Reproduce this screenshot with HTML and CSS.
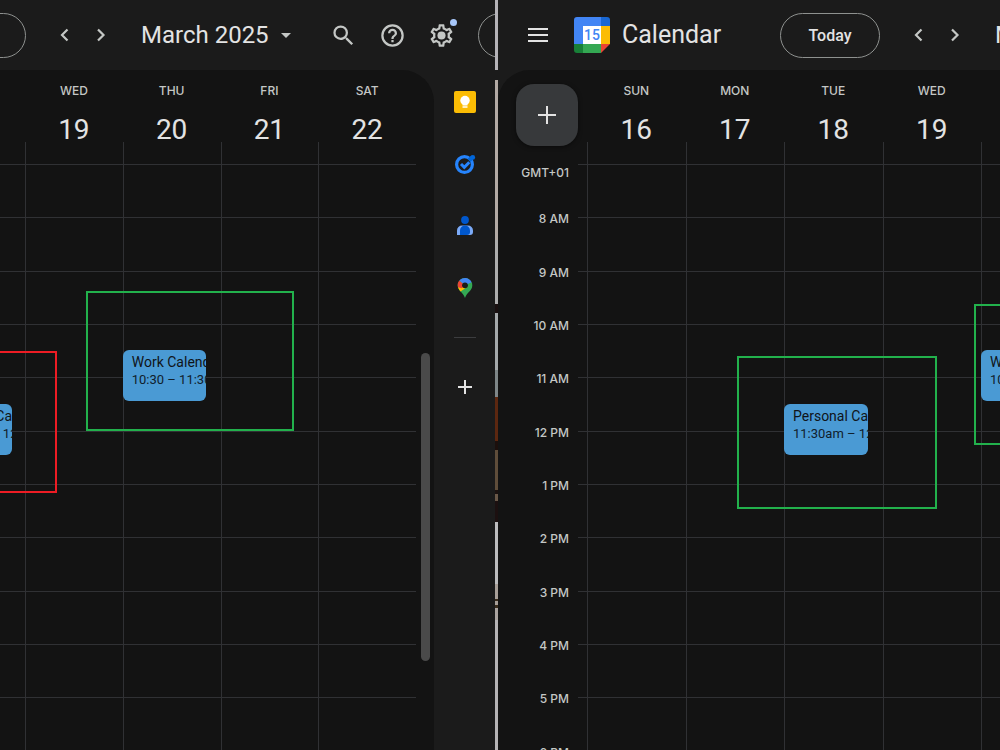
FILE: index.html
```html
<!DOCTYPE html>
<html lang="en">
<head>
  <meta charset="UTF-8">
  <meta name="viewport" content="width=device-width, initial-scale=1.0">
  <title>Calendar - March 2025</title>
  <link rel="stylesheet" href="styles.css">
</head>
<body>
  <div class="desktop">

    <!-- Left window -->
    <section class="window window-left">
      <header class="topbar">
        <button class="today today-cut" aria-label="Today"></button>
        <button class="icon-button" aria-label="Previous week">
          <svg width="24" height="24" viewBox="0 0 24 24"><path d="M14.5 6.5L9 12l5.5 5.5" fill="none" stroke="currentColor" stroke-width="2.2"/></svg>
        </button>
        <button class="icon-button" aria-label="Next week">
          <svg width="24" height="24" viewBox="0 0 24 24"><path d="M9 6.5L14.5 12 9 17.5" fill="none" stroke="currentColor" stroke-width="2.2"/></svg>
        </button>
        <button class="month">March 2025
          <svg width="10" height="5" viewBox="0 0 10 5"><path d="M0 0h10L5 5z" fill="#c4c7c5"/></svg>
        </button>
        <div class="tools">
          <button class="tool-button" aria-label="Search">
            <svg width="27" height="27" viewBox="0 0 24 24"><path fill="currentColor" d="M15.5 14h-.79l-.28-.27A6.47 6.47 0 0 0 16 9.5 6.5 6.5 0 1 0 9.5 16c1.61 0 3.09-.59 4.23-1.57l.27.28v.79l5 4.99L20.49 19l-4.99-5zm-6 0a4.5 4.5 0 1 1 0-9 4.5 4.5 0 0 1 0 9z"/></svg>
          </button>
          <button class="tool-button" aria-label="Help">
            <svg width="27" height="27" viewBox="0 0 24 24"><path fill="currentColor" d="M11 18h2v-2h-2v2zm1-16a10 10 0 1 0 0 20 10 10 0 0 0 0-20zm0 18a8 8 0 1 1 0-16 8 8 0 0 1 0 16zm0-14a4 4 0 0 0-4 4h2a2 2 0 1 1 4 0c0 2-3 1.75-3 5h2c0-2.25 3-2.5 3-5a4 4 0 0 0-4-4z"/></svg>
          </button>
          <button class="tool-button" aria-label="Settings">
            <svg width="27" height="27" viewBox="0 0 24 24"><path fill="currentColor" d="M19.43 12.98c.04-.32.07-.64.07-.98 0-.34-.03-.66-.07-.98l2.11-1.65c.19-.15.24-.42.12-.64l-2-3.46c-.09-.16-.26-.25-.44-.25-.06 0-.12.01-.17.03l-2.49 1c-.52-.4-1.08-.73-1.69-.98l-.38-2.65C14.46 2.18 14.25 2 14 2h-4c-.25 0-.46.18-.49.42l-.38 2.65c-.61.25-1.17.59-1.69.98l-2.49-1c-.06-.02-.12-.03-.18-.03-.17 0-.34.09-.43.25l-2 3.46c-.13.22-.07.49.12.64l2.11 1.65c-.04.32-.07.65-.07.98 0 .33.03.66.07.98l-2.11 1.65c-.19.15-.24.42-.12.64l2 3.46c.09.16.26.25.44.25.06 0 .12-.01.17-.03l2.49-1c.52.4 1.08.73 1.69.98l.38 2.65c.03.24.24.42.49.42h4c.25 0 .46-.18.49-.42l.38-2.65c.61-.25 1.17-.59 1.69-.98l2.49 1c.06.02.12.03.18.03.17 0 .34-.09.43-.25l2-3.46c.12-.22.07-.49-.12-.64l-2.11-1.65zm-1.98-1.71c.04.31.05.52.05.73 0 .21-.02.43-.05.73l-.14 1.13.89.7 1.08.84-.7 1.21-1.27-.51-1.04-.42-.9.68c-.43.32-.84.56-1.25.73l-1.06.43-.16 1.13-.2 1.35h-1.4l-.19-1.35-.16-1.13-1.06-.43c-.43-.18-.83-.41-1.23-.71l-.91-.7-1.06.43-1.27.51-.7-1.21 1.08-.84.89-.7-.14-1.13c-.03-.31-.05-.54-.05-.74s.02-.43.05-.73l.14-1.13-.89-.7-1.08-.84.7-1.21 1.27.51 1.04.42.9-.68c.43-.32.84-.56 1.25-.73l1.06-.43.16-1.13.2-1.35h1.39l.19 1.35.16 1.13 1.06.43c.43.18.83.41 1.23.71l.91.7 1.06-.43 1.27-.51.7 1.21-1.07.85-.89.7.14 1.13z"/><circle cx="12" cy="12" r="3.6" fill="currentColor"/></svg>
            <span class="dot"></span>
          </button>
          <button class="account" aria-label="Account"></button>
        </div>
      </header>

      <div class="main">
        <div class="pane">
          <div class="week-head">
            <div></div>
            <div class="day-head"><span>WED</span><b>19</b></div>
            <div class="day-head"><span>THU</span><b>20</b></div>
            <div class="day-head"><span>FRI</span><b>21</b></div>
            <div class="day-head"><span>SAT</span><b>22</b></div>
          </div>
          <div class="week-body">
            <div class="hours">
              <i></i><i></i><i></i><i></i><i></i><i></i><i></i><i></i><i></i><i></i><i></i>
            </div>
            <div class="days">
              <div class="day-cut">
                <div class="event event-noon event-cut"><strong>Personal Ca</strong><span>11:30am – 12</span></div>
              </div>
              <div class="day"></div>
              <div class="day">
                <div class="event event-morning"><strong>Work Calendar</strong><span>10:30 – 11:30</span></div>
              </div>
              <div class="day"></div>
              <div class="day"></div>
            </div>
            <div class="mark mark-red"></div>
            <div class="mark mark-work"></div>
          </div>
          <div class="scroll-thumb"></div>
        </div>

        <aside class="side">
          <button aria-label="Keep">
            <svg width="22" height="22" viewBox="0 0 22 22"><rect width="22" height="22" rx="2" fill="#fbbc04"/><circle cx="11" cy="9.5" r="4.7" fill="#fff"/><path d="M8.5 11h5v3.4h-5zM8.5 15.200h5v1.6h-5z" fill="#fff"/></svg>
          </button>
          <button aria-label="Tasks">
            <svg width="22" height="22" viewBox="0 0 22 22"><circle cx="10.5" cy="11.5" r="7.9" fill="none" stroke="#2684fc" stroke-width="3.2"/><path d="M7 11l3.300 3.300 5-5" fill="none" stroke="#2684fc" stroke-width="3"/><path d="M15 7.500l3.500-3.500" stroke="#0066da" stroke-width="4"/><circle cx="18.800" cy="4.400" r="2.300" fill="#0066da"/></svg>
          </button>
          <button aria-label="Contacts">
            <svg width="22" height="22" viewBox="0 0 22 22"><circle cx="11" cy="5" r="3.9" fill="#0057cc"/><path d="M3 20v-4.500a5 5 0 0 1 5-5h6a5 5 0 0 1 5 5V17a3 3 0 0 1-3 3z" fill="#7baaf7"/><path d="M6 20v-4.500a5 5 0 0 1 10 0V17a3 3 0 0 1-3 3z" fill="#0057cc"/></svg>
          </button>
          <button aria-label="Maps">
            <svg width="22" height="22" viewBox="0 0 22 22">
              <path d="M11 1a7.300 7.300 0 0 1 7.300 7.300c0 5.700-5.300 6.700-7.300 12.700-2-6-7.300-7-7.300-12.700A7.300 7.300 0 0 1 11 1z" fill="#34a853"/>
              <path d="M4 10.200c.5 1.600 1.400 2.800 2.500 4.300L13.200 10 11 8.300z" fill="#fbbc04"/>
              <path d="M5.400 3.600a7.300 7.300 0 0 0-1.400 6.600l3.700 1.100L11 8.300z" fill="#ea4335"/>
              <path d="M5.400 3.600A7.300 7.300 0 0 1 17.600 5.200L11 8.300z" fill="#4285f4"/>
              <circle cx="11" cy="8.300" r="2.900" fill="#1b1b1b"/>
            </svg>
          </button>
          <hr>
          <button aria-label="Get add-ons">
            <svg width="14" height="14" viewBox="0 0 14 14"><path d="M7 0v14M0 7h14" stroke="#e3e3e3" stroke-width="2"/></svg>
          </button>
        </aside>
      </div>
    </section>

    <div class="divider"></div>

    <!-- Right window -->
    <section class="window window-right">
      <header class="topbar">
        <button class="icon-button menu" aria-label="Main menu">
          <svg width="20" height="14" viewBox="0 0 20 14"><path d="M0 1h20M0 7h20M0 13h20" stroke="#e3e3e3" stroke-width="2"/></svg>
        </button>
        <div class="brand">
          <svg width="36" height="36" viewBox="0 0 36 36">
            <path d="M3 0h24v9H9v18H0V3a3 3 0 0 1 3-3z" fill="#4285f4"/>
            <path d="M27 0h6a3 3 0 0 1 3 3v6h-9z" fill="#1967d2"/>
            <path d="M27 9h9v18h-9z" fill="#fbbc04"/>
            <path d="M9 27h18v9H9z" fill="#34a853"/>
            <path d="M0 27h9v9H3a3 3 0 0 1-3-3z" fill="#188038"/>
            <path d="M27 27h9l-9 9z" fill="#ea4335"/>
            <path d="M9 9h18v18H9z" fill="#fff"/>
            <text x="18" y="23" class="logo-day">15</text>
          </svg>
          <span>Calendar</span>
        </div>
        <button class="today">Today</button>
        <button class="icon-button" aria-label="Previous week">
          <svg width="24" height="24" viewBox="0 0 24 24"><path d="M14.5 6.5L9 12l5.5 5.5" fill="none" stroke="currentColor" stroke-width="2.2"/></svg>
        </button>
        <button class="icon-button" aria-label="Next week">
          <svg width="24" height="24" viewBox="0 0 24 24"><path d="M9 6.5L14.5 12 9 17.5" fill="none" stroke="currentColor" stroke-width="2.2"/></svg>
        </button>
        <button class="month">March 2025</button>
      </header>

      <div class="main">
        <div class="pane">
          <div class="week-head">
            <div>
              <button class="create" aria-label="Create">
                <svg width="18" height="18" viewBox="0 0 18 18"><path d="M9 0v18M0 9h18" stroke="#e3e3e3" stroke-width="2"/></svg>
              </button>
            </div>
            <div class="day-head"><span>SUN</span><b>16</b></div>
            <div class="day-head"><span>MON</span><b>17</b></div>
            <div class="day-head"><span>TUE</span><b>18</b></div>
            <div class="day-head"><span>WED</span><b>19</b></div>
            <div class="day-head"></div>
          </div>
          <div class="week-body">
            <div class="times">
              <span class="zone">GMT+01</span>
              <span>8 AM</span>
              <span>9 AM</span>
              <span>10 AM</span>
              <span>11 AM</span>
              <span>12 PM</span>
              <span>1 PM</span>
              <span>2 PM</span>
              <span>3 PM</span>
              <span>4 PM</span>
              <span>5 PM</span>
              <span>6 PM</span>
            </div>
            <div class="hours">
              <i></i><i></i><i></i><i></i><i></i><i></i><i></i><i></i><i></i><i></i><i></i>
            </div>
            <div class="days">
              <div></div>
              <div class="day"></div>
              <div class="day"></div>
              <div class="day">
                <div class="event event-noon"><strong>Personal Calendar</strong><span>11:30am – 12:30pm</span></div>
              </div>
              <div class="day"></div>
              <div class="day">
                <div class="event event-morning event-wide"><strong>Work Calendar</strong><span>10:30 – 11:30</span></div>
              </div>
            </div>
            <div class="mark mark-personal"></div>
            <div class="mark mark-edge"></div>
          </div>
        </div>
      </div>
    </section>

  </div>
</body>
</html>
```
FILE: styles.css
```css
* {
  box-sizing: border-box;
}

body {
  margin: 0;
  background: #1b1b1b;
  color: #e3e3e3;
  font-family: Roboto, "Liberation Sans", sans-serif;
}

button {
  display: flex;
  align-items: center;
  justify-content: center;
  flex-shrink: 0;
  padding: 0;
  border: none;
  background: none;
  color: #c4c7c5;
  font-family: inherit;
  cursor: pointer;
}

.desktop {
  display: flex;
  height: 100vh;
  overflow: hidden;
}

.window {
  display: flex;
  flex-direction: column;
  min-width: 0;
  overflow: hidden;
}

.window-left {
  flex: 495 1 0;
}

.window-right {
  flex: 502 1 0;
}

/* strip of wallpaper between the two windows */
.divider {
  width: 3px;
  background: linear-gradient(
    #b5b3b8 0 70px, #1b1b1b 70px 80px,
    #b3aaa5 80px 240px, #adadad 240px 304px, #1a1010 304px 313px,
    #a5a9ab 313px 370px, #7e8688 370px 397px, #5c2710 397px 441px,
    #1c0f0c 441px 450px, #5f4d3a 450px 490px, #1c1210 490px 494px,
    #6a5848 494px 501px, #1c1010 501px 522px, #bcbcbe 522px 584px,
    #a89f98 584px 599px, #3a2c1c 599px 601px, #a89f98 601px 605px,
    #3a2c1c 605px 608px, #aaa39f 608px 620px, #b5b3b5 620px);
}

/* Top bar */
.topbar {
  display: flex;
  align-items: center;
  flex-shrink: 0;
  height: 70px;
}

.icon-button {
  width: 36px;
  height: 36px;
}

.menu {
  margin: 0 18px 0 22px;
}

.brand {
  display: flex;
  align-items: center;
  flex-shrink: 0;
  gap: 12px;
  width: 206px;
  font-size: 25px;
  line-height: 32px;
}

.logo-day {
  fill: #4285f4;
  font-size: 14px;
  font-weight: 500;
  text-anchor: middle;
}

.today {
  width: 100px;
  height: 45px;
  margin-right: 21px;
  border: 1px solid #8e918f;
  border-radius: 23px;
  color: #e3e3e3;
  font-size: 16px;
  font-weight: 500;
}

.today-cut {
  margin-left: -74px;
}

.month {
  gap: 12px;
  margin-left: 22px;
  color: #e3e3e3;
  font-size: 24px;
  line-height: 32px;
  white-space: nowrap;
}

.tools {
  display: flex;
  align-items: center;
  gap: 1px;
  margin: 0 -28px 0 auto;
}

.tool-button {
  position: relative;
  width: 48px;
  height: 48px;
}

.dot {
  position: absolute;
  top: 8px;
  right: 8px;
  width: 7px;
  height: 7px;
  border-radius: 50%;
  background: #a8c7fa;
}

.account {
  width: 45px;
  height: 45px;
  margin-left: 12px;
  border: 1px solid #8e918f;
  border-radius: 50%;
}

/* Calendar */
.main {
  display: flex;
  flex: 1;
  min-height: 0;
}

.pane {
  position: relative;
  flex: 1;
  min-width: 0;
  overflow: hidden;
  background: #131313;
}

.window-left .pane {
  border-top-right-radius: 32px;
}

.window-right .pane {
  border-top-left-radius: 32px;
}

.week-head,
.days {
  display: grid;
}

.window-left .week-head,
.window-left .days {
  grid-template-columns: 25px repeat(4, 1fr) 18px;
}

.window-right .week-head,
.window-right .days {
  grid-template-columns: 89px repeat(4, 1fr) 19px;
}

.week-head {
  height: 94px;
}

.day-head {
  position: relative;
  padding-top: 13px;
  text-align: center;
}

.day-head::before {
  content: "";
  position: absolute;
  left: 0;
  bottom: 0;
  height: 22px;
  border-left: 1px solid #303134;
}

.day-head span {
  display: block;
  color: #c4c7c5;
  font-family: Inter, sans-serif;
  font-size: 12px;
  font-weight: 500;
  line-height: 16px;
}

.day-head b {
  display: block;
  margin-top: 15px;
  font-size: 28px;
  font-weight: 400;
  line-height: 32px;
}

.create {
  width: 62px;
  height: 62px;
  margin: 14px 0 0 18px;
  border-radius: 18px;
  background: #37393b;
  box-shadow: 0 1px 4px rgba(0, 0, 0, 0.5);
}

.week-body {
  position: relative;
  display: flex;
}

.hours,
.times {
  display: grid;
  grid-auto-rows: 53px 54px 53px;
}

.hours {
  flex: 1;
}

.hours i {
  border-top: 1px solid #303134;
}

.window-left .hours {
  margin-right: 18px;
}

.times {
  width: 80px;
  padding: 1px 9px 0 0;
  color: #c4c7c5;
  font-family: Inter, sans-serif;
  font-size: 12px;
  font-weight: 500;
  line-height: 16px;
  text-align: right;
}

.times span {
  margin-top: -7px;
}

.times .zone {
  margin-top: 0;
}

.days {
  position: absolute;
  inset: 0;
}

.day,
.day-cut {
  position: relative;
}

.day {
  border-left: 1px solid #303134;
}

.event {
  position: absolute;
  left: -1px;
  width: 86%;
  height: 51px;
  padding: 4px 0 0 9px;
  overflow: hidden;
  border-radius: 6px;
  background: #4a9ad4;
  color: #10202c;
  font-size: 13px;
  line-height: 17px;
  white-space: nowrap;
}

.event strong,
.event span {
  display: block;
  font-weight: 400;
}

.event strong {
  color: #101418;
  font-size: 14px;
}

.event-morning {
  top: 186px;
}

.event-noon {
  top: 240px;
}

.event-cut {
  left: auto;
  right: 13px;
  width: 84px;
}

.event-wide {
  width: 84px;
}

/* Highlight frames */
.mark {
  position: absolute;
  border: 2px solid #22b14c;
}

.mark-red {
  top: 187px;
  left: -2px;
  width: 59px;
  height: 142px;
  border-color: #ed1c24;
}

.mark-work {
  top: 127px;
  left: 86px;
  width: 208px;
  height: 140px;
}

.mark-personal {
  top: 192px;
  left: 239px;
  width: 200px;
  height: 153px;
}

.mark-edge {
  top: 140px;
  right: -2px;
  width: 28px;
  height: 141px;
}

.scroll-thumb {
  position: absolute;
  top: 283px;
  right: 4px;
  width: 9px;
  height: 308px;
  border-radius: 5px;
  background: #4a4a4a;
}

/* Side panel */
.side {
  width: 61px;
  padding-top: 1px;
}

.side button {
  width: 100%;
  height: 62px;
}

.side hr {
  width: 22px;
  height: 1px;
  margin: 18px auto;
  border: none;
  background: #3c3d3f;
}
```
